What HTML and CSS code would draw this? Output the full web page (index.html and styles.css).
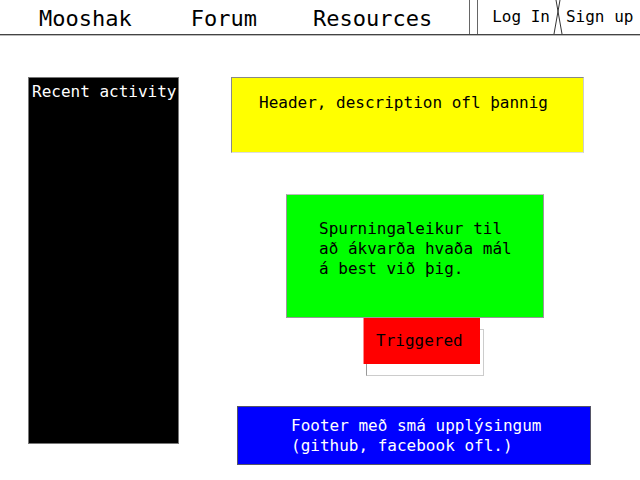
FILE: index.html
```html
<!DOCTYPE html>
<html lang="is">
<head>
<meta charset="utf-8">
<title>Mooshak</title>
<link rel="stylesheet" href="styles.css">
</head>
<body>
<nav class="nav">
  <a class="nav-link brand">Mooshak</a>
  <a class="nav-link forum">Forum</a>
  <a class="nav-link resources">Resources</a>
  <div class="divider"></div>
  <a class="auth login">Log In</a>
  <svg class="cross" width="10" height="34" viewBox="0 0 10 34" aria-hidden="true">
    <line x1="3" y1="0" x2="9" y2="34" stroke="#333" stroke-width="1"/>
    <line x1="7" y1="0" x2="1" y2="34" stroke="#333" stroke-width="1"/>
  </svg>
  <a class="auth signup">Sign up</a>
</nav>
<div class="page">
  <aside class="sidebar">Recent activity</aside>
  <main class="main">
    <section class="hero">Header, description ofl þannig</section>
    <section class="quiz">Spurningaleikur til að ákvarða hvaða mál á best við þig.</section>
    <div class="trigger-wrap">
      <div class="trigger-shadow"></div>
      <div class="trigger">Triggered</div>
    </div>
    <footer class="footer">Footer með smá upplýsingum (github, facebook ofl.)</footer>
  </main>
</div>
</body>
</html>
```
FILE: styles.css
```css
html, body {
  margin: 0;
  padding: 0;
  background: #fff;
}
body {
  font-family: "DejaVu Sans Mono", "Liberation Mono", monospace;
  font-size: 16px;
  line-height: 20px;
  color: #000;
}
.nav {
  display: flex;
  align-items: flex-start;
  height: 34px;
  border-bottom: 1px solid #444;
  box-shadow: 0 1px 0 #bbb;
}
.nav-link {
  font-size: 22px;
  line-height: 26px;
  padding-top: 6px;
  color: #000;
}
.brand { margin-left: 39px; }
.forum { margin-left: 59px; }
.resources { margin-left: 56px; }
.divider {
  margin-left: 37px;
  width: 7px;
  height: 34px;
  border-left: 1px solid #666;
  border-right: 1px solid #666;
}
.auth {
  font-size: 16px;
  line-height: 20px;
  padding-top: 7px;
  color: #000;
}
.login { margin-left: 14px; }
.cross { display: block; margin-left: 3px; margin-right: 3px; }
.page {
  display: flex;
  align-items: flex-start;
  padding: 42px 0 0 28px;
}
.sidebar {
  box-sizing: border-box;
  width: 151px;
  height: 367px;
  background: #000;
  color: #fff;
  border: 1px solid #777;
  padding: 4px 0 0 3px;
}
.main {
  display: flex;
  flex-direction: column;
  align-items: flex-start;
  margin-left: 52px;
}
.hero {
  box-sizing: border-box;
  width: 353px;
  height: 76px;
  background: #ff0;
  border: 1px solid #888;
  border-bottom-color: #ddd;
  border-right-color: #ccc;
  padding: 15px 0 0 27px;
}
.quiz {
  box-sizing: border-box;
  margin-top: 41px;
  margin-left: 55px;
  width: 258px;
  height: 124px;
  background: #0f0;
  border: 1px solid #999;
  border-top-color: #bbb;
  padding: 24px 24px 0 32px;
}
.trigger-wrap {
  position: relative;
  margin-left: 132px;
  width: 121px;
  height: 58px;
}
.trigger-shadow {
  position: absolute;
  left: 3px;
  top: 11px;
  width: 116px;
  height: 45px;
  border: 1px solid #ccc;
  border-left-color: #999;
}
.trigger {
  position: relative;
  box-sizing: border-box;
  width: 117px;
  height: 46px;
  background: #f00;
  border-left: 1px solid #f88;
  color: #000;
  padding: 13px 0 0 12px;
}
.footer {
  box-sizing: border-box;
  margin-top: 30px;
  margin-left: 6px;
  width: 354px;
  height: 59px;
  background: #00f;
  color: #fff;
  border: 1px solid #556;
  padding: 9px 20px 0 53px;
}
```
